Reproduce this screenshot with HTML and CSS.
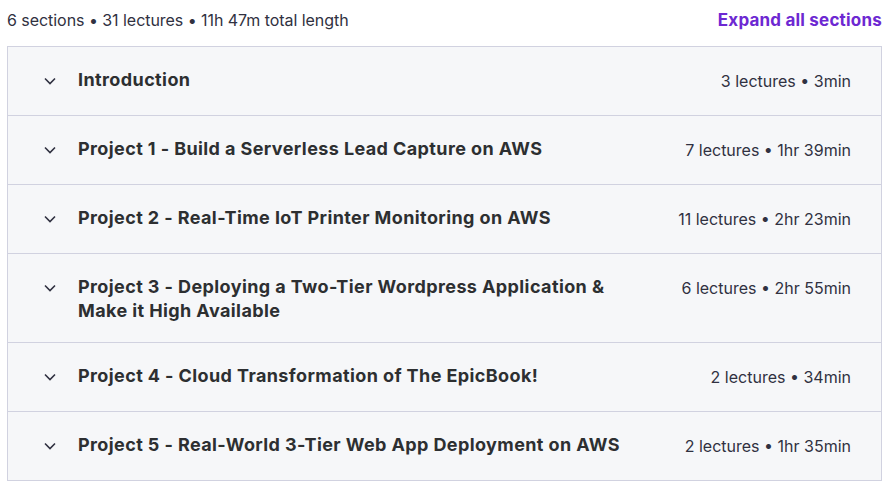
FILE: index.html
```html
<!DOCTYPE html>
<html lang="en">
<head>
<meta charset="utf-8">
<title>Course content</title>
<link rel="stylesheet" href="styles.css">
</head>
<body>
<div class="curriculum">
  <div class="summary">
    <span class="summary-text">6 sections • 31 lectures • 11h 47m total length</span>
    <button class="expand-all">Expand all sections</button>
  </div>
  <div class="accordion">
    <div class="panel">
      <span class="chev"><svg width="12" height="8" viewBox="0 0 12 8"><path d="M1 1.5 L6 6.5 L11 1.5" fill="none" stroke="#303141" stroke-width="1.6"/></svg></span>
      <span class="title">Introduction</span>
      <span class="meta">3 lectures • 3min</span>
    </div>
    <div class="panel">
      <span class="chev"><svg width="12" height="8" viewBox="0 0 12 8"><path d="M1 1.5 L6 6.5 L11 1.5" fill="none" stroke="#303141" stroke-width="1.6"/></svg></span>
      <span class="title">Project 1 - Build a Serverless Lead Capture on AWS</span>
      <span class="meta">7 lectures • 1hr 39min</span>
    </div>
    <div class="panel">
      <span class="chev"><svg width="12" height="8" viewBox="0 0 12 8"><path d="M1 1.5 L6 6.5 L11 1.5" fill="none" stroke="#303141" stroke-width="1.6"/></svg></span>
      <span class="title">Project 2 - Real-Time IoT Printer Monitoring on AWS</span>
      <span class="meta">11 lectures • 2hr 23min</span>
    </div>
    <div class="panel">
      <span class="chev"><svg width="12" height="8" viewBox="0 0 12 8"><path d="M1 1.5 L6 6.5 L11 1.5" fill="none" stroke="#303141" stroke-width="1.6"/></svg></span>
      <span class="title">Project 3 - Deploying a Two-Tier Wordpress Application &amp; Make it High Available</span>
      <span class="meta">6 lectures • 2hr 55min</span>
    </div>
    <div class="panel">
      <span class="chev"><svg width="12" height="8" viewBox="0 0 12 8"><path d="M1 1.5 L6 6.5 L11 1.5" fill="none" stroke="#303141" stroke-width="1.6"/></svg></span>
      <span class="title">Project 4 - Cloud Transformation of The EpicBook!</span>
      <span class="meta">2 lectures • 34min</span>
    </div>
    <div class="panel">
      <span class="chev"><svg width="12" height="8" viewBox="0 0 12 8"><path d="M1 1.5 L6 6.5 L11 1.5" fill="none" stroke="#303141" stroke-width="1.6"/></svg></span>
      <span class="title">Project 5 - Real-World 3-Tier Web App Deployment on AWS</span>
      <span class="meta">2 lectures • 1hr 35min</span>
    </div>
  </div>
</div>
</body>
</html>
```

FILE: styles.css
```css
* { box-sizing: border-box; }
html, body { margin: 0; padding: 0; background: #ffffff; }
.curriculum {
  padding: 0 7px 0 7px;
  width: 889px;
  font-family: "Inter", "Liberation Sans", sans-serif;
  color: #303141;
}
.summary {
  display: flex;
  justify-content: space-between;
  align-items: center;
  height: 46px;
  padding-bottom: 6px;
}
.summary-text {
  font-size: 16px;
  letter-spacing: -0.05px;
  color: #303141;
}
.expand-all {
  background: none;
  border: 0;
  padding: 0;
  font-family: "Inter", "Liberation Sans", sans-serif;
  font-size: 17px;
  letter-spacing: 0.2px;
  font-weight: 700;
  color: #6d28d2;
  cursor: pointer;
}
.accordion {
  border: 1px solid #d1d2e0;
  background: #f6f7f9;
}
.panel {
  display: flex;
  align-items: flex-start;
  padding: 20px 30px 19px 36px;
  min-height: 69px;
  border-top: 1px solid #d1d2e0;
}
.panel:first-child { border-top: 0; min-height: 68px; }
.chev {
  flex: none;
  width: 12px;
  height: 24px;
  display: flex;
  align-items: center;
  margin-right: 22px;
  margin-top: 2px;
}
.chev svg { display: block; }
.title {
  flex: 1;
  font-weight: 700;
  font-size: 18px;
  letter-spacing: 0.4px;
  line-height: 24px;
  color: #2d2f31;
  margin-right: 44px;
  padding-top: 1px;
}
.meta {
  flex: none;
  font-size: 16px;
  line-height: 28px;
  color: #303141;
}
```
